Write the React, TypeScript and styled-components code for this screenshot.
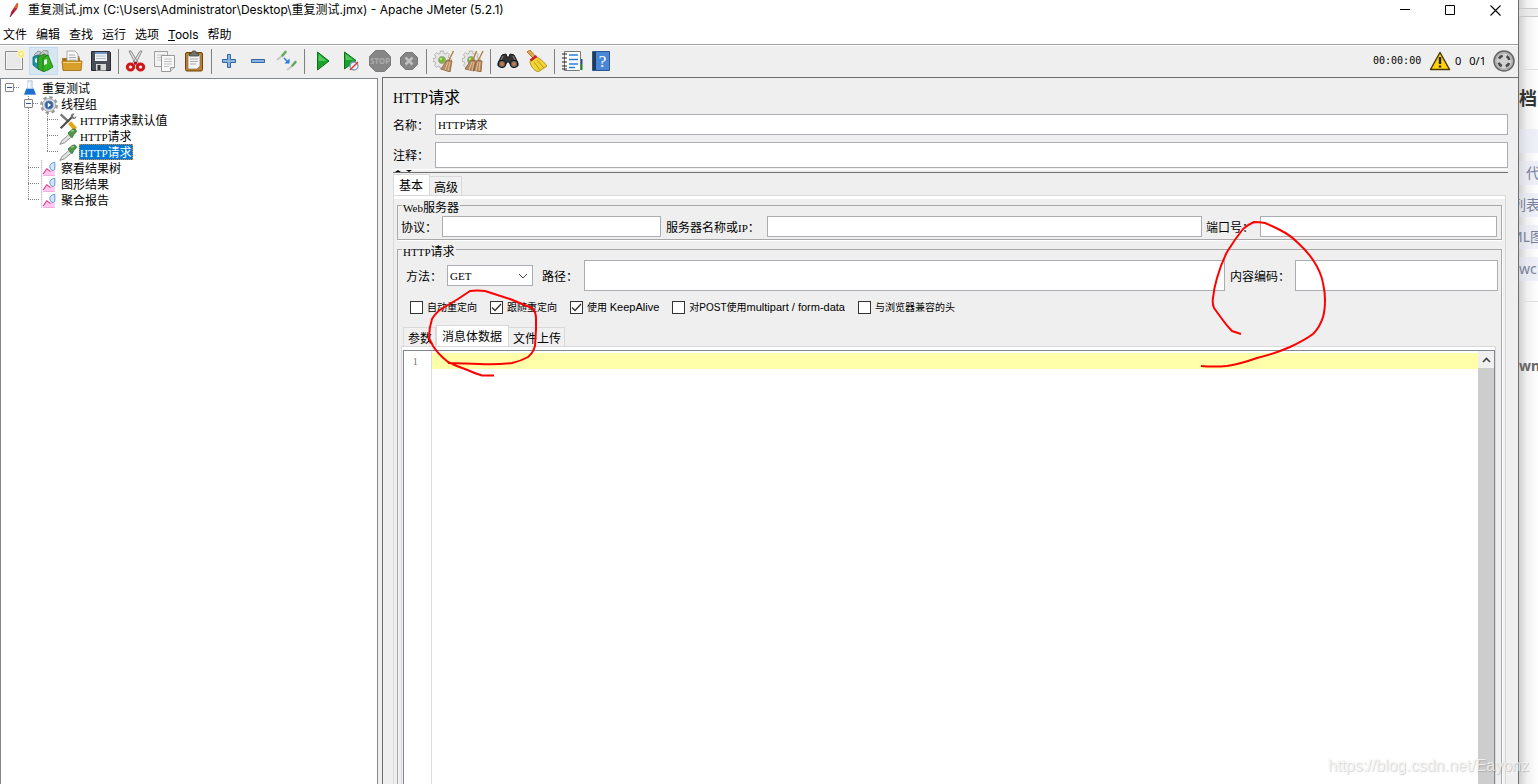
import React from "react";
import styled, { createGlobalStyle, css } from "styled-components";

const Global = createGlobalStyle`
  * { box-sizing: border-box; }
  html, body { margin: 0; height: 100%; overflow: hidden; }
  #root { height: 100%; }
  body {
    font-family: "Liberation Sans", "Noto Sans CJK SC", sans-serif;
    font-size: 12px;
    line-height: 16px;
    color: #000;
    background: #fff;
  }
  button, input, select, textarea { font: inherit; color: inherit; margin: 0; }
`;

/* ---------- frame ---------- */

const Desktop = styled.div`
  display: flex;
  height: 100vh;
  position: relative;
  overflow: hidden;
`;

const AppWindow = styled.div`
  flex: 1;
  min-width: 0;
  display: flex;
  flex-direction: column;
  background: #efefef;
  border-right: 1px solid #6e6e6e;
  font-family: "Noto Sans CJK SC", sans-serif;
`;

const TitleBar = styled.header`
  display: flex;
  align-items: center;
  height: 20px;
  padding: 0 0 0 7px;
  background: #fff;
  font-family: Inter, "Noto Sans CJK SC", sans-serif;
`;

const TitleText = styled.h1`
  flex: 1;
  margin: 0 0 0 7px;
  font-size: 12px;
  font-weight: 400;
  line-height: 20px;
  white-space: nowrap;
`;

const WindowButton = styled.button`
  width: 45px;
  height: 20px;
  padding: 0;
  border: 0;
  background: none;
  display: grid;
  place-items: center;
`;

const MenuBar = styled.nav`
  display: flex;
  gap: 9px;
  height: 25px;
  padding: 6px 3px 0;
  background: #fff;
  border-bottom: 1px solid #a0a0a0;
  font-family: Inter, "Noto Sans CJK SC", sans-serif;
`;

const MenuItem = styled.button`
  padding: 0;
  border: 0;
  background: none;
  height: 18px;
  line-height: 18px;
`;

const ToolBar = styled.div`
  display: flex;
  align-items: flex-start;
  height: 32px;
  padding-top: 1px;
  border-top: 1px solid #fff;
`;

const ToolButton = styled.button<{ $active?: boolean }>`
  width: 29px;
  height: 28px;
  padding: 2px 0 0 2px;
  border: 1px solid ${(p) => (p.$active ? "#c0dcf3" : "transparent")};
  background: ${(p) => (p.$active ? "#d8e6f2" : "none")};
  display: grid;
  place-items: start;
`;

const Separator = styled.span`
  width: 6px;
  height: 25px;
  margin-top: 2px;
  background: linear-gradient(#808080, #808080) 2px 0 / 1px 100% no-repeat;
`;

const Status = styled.div`
  margin-left: auto;
  display: flex;
  align-items: center;
  height: 28px;
  padding-right: 3px;
  font-family: "Noto Sans", sans-serif;
  font-size: 11px;
`;

const Clock = styled.span`
  width: 56px;
  font-family: "DejaVu Sans Mono", monospace;
  font-size: 10px;
`;
const Errors = styled.span`
  margin: 0 8px 0 4px;
`;
const Threads = styled.span`
  margin-right: 7px;
`;

const Body = styled.main`
  flex: 1;
  min-height: 0;
  display: flex;
  gap: 4px;
`;

/* ---------- tree ---------- */

const TreePane = styled.aside`
  flex: 0 0 378px;
  margin-top: 1px;
  padding-top: 1px;
  background: #fff;
  border: solid #828790;
  border-width: 1px 1px 0 1px;
`;

const TreeList = styled.ul`
  list-style: none;
  margin: 0;
  padding: 0;
`;

const TreeRow = styled.li`
  display: flex;
  align-items: center;
  height: 16px;
`;

type Guide = "none" | "line" | "branch" | "last" | "root" | "node";
const vDots = "repeating-linear-gradient(#808080 0 1px, transparent 1px 2px)";
const hDots = "repeating-linear-gradient(90deg, #808080 0 1px, transparent 1px 2px)";
const guides: Record<Guide, string> = {
  none: "none",
  line: `${vDots} 8px 0 / 1px 16px no-repeat`,
  branch: `${vDots} 8px 0 / 1px 16px no-repeat, ${hDots} 8px 7px / 11px 1px no-repeat`,
  last: `${vDots} 8px 0 / 1px 8px no-repeat, ${hDots} 8px 7px / 11px 1px no-repeat`,
  root: `${hDots} 13px 7px / 6px 1px no-repeat`,
  node: `${vDots} 8px 0 / 1px 16px no-repeat, ${hDots} 13px 7px / 6px 1px no-repeat`,
};

const GuideCell = styled.span<{ $kind: Guide }>`
  flex: 0 0 19px;
  height: 16px;
  padding: 3px 0 0 4px;
  background: ${(p) => guides[p.$kind]};
`;

const Toggle = styled.button`
  display: block;
  width: 9px;
  height: 9px;
  padding: 0;
  border: 1px solid #848484;
  border-radius: 1px;
  background: linear-gradient(#33528f, #33528f) center / 5px 1px no-repeat #fafafa;
`;

const NodeIcon = styled.span`
  flex: 0 0 20px;
  height: 16px;
  margin-right: 1px;
  display: grid;
  place-items: center;
`;

const NodeLabel = styled.span<{ $selected?: boolean }>`
  height: 16px;
  line-height: 16px;
  padding: 0 1px;
  white-space: nowrap;
  ${(p) =>
    p.$selected &&
    css`
      background: #0078d7;
      color: #fff;
      outline: 1px dotted #e08a2e;
      outline-offset: -1px;
    `}
`;

/* Latin runs take about half the width of a Chinese character */
const Half = styled.span<{ $large?: boolean }>`
  font-family: "Liberation Serif", serif;
  font-size: ${(p) => (p.$large ? 14 : 11)}px;
`;

/* ---------- editor pane ---------- */

const Pane = styled.section`
  flex: 1;
  min-width: 0;
  display: flex;
  flex-direction: column;
  border: solid #6e6e6e;
  border-width: 1px 0 0 1px;
  padding: 8px 10px 0;
`;

const PaneTitle = styled.h2`
  margin: 0 0 8px;
  font-size: 16px;
  font-weight: 400;
  line-height: 20px;
  height: 20px;
`;

const Field = styled.div<{ $tall?: boolean }>`
  display: flex;
  align-items: center;
  height: ${(p) => (p.$tall ? 26 : 21)}px;
  margin-bottom: ${(p) => (p.$tall ? 1 : 7)}px;
`;

const Label = styled.label<{ $width: number; $indent?: number }>`
  flex: 0 0 ${(p) => p.$width}px;
  height: 16px;
  padding-left: ${(p) => p.$indent ?? 0}px;
  white-space: nowrap;
`;

const TextInput = styled.input<{ $width?: number }>`
  flex: ${(p) => (p.$width ? `0 0 ${p.$width}px` : "1 1 0")};
  min-width: 0;
  align-self: stretch;
  padding: 0 3px;
  border: 1px solid #abadb3;
  border-radius: 0;
  background: #fff;
  outline: 0;
`;

const NameInput = styled(TextInput)`
  padding: 0 2px;
  font-family: "Liberation Serif", "Noto Sans CJK SC", serif;
  font-size: 11px;
`;

const Divider = styled.div`
  height: 4px;
  border-top: 1px solid #fff;
  border-bottom: 1px solid #6e6e6e;
  svg { display: block; }
`;

const Tabs = styled.div`
  display: flex;
  align-items: flex-end;
  height: 22px;
`;

const Tab = styled.button<{ $active?: boolean }>`
  height: ${(p) => (p.$active ? 21 : 19)}px;
  padding: 0 ${(p) => (p.$active ? "6px 0 5px" : "4px")};
  border: 1px solid #d9d9d9;
  border-bottom: 0;
  border-left-width: ${(p) => (p.$active ? 1 : 0)}px;
  background: ${(p) => (p.$active ? "#fff" : "#f0f0f0")};
  line-height: 20px;
  white-space: nowrap;
  padding-left: ${(p) => (p.$active ? 5 : 4)}px;
  padding-right: ${(p) => (p.$active ? 6 : 3)}px;
  &:first-child { border-left-width: 1px; }
`;

const TabPanel = styled.div`
  flex: 1;
  min-height: 0;
  display: flex;
  flex-direction: column;
  margin-right: 2px;
  padding: 2px 3px 0;
  border: solid #d9d9d9;
  border-width: 1px 1px 0;
  box-shadow: inset 0 3px #fff;
`;

const Group = styled.fieldset<{ $fill?: boolean }>`
  min-width: 0;
  margin: 0;
  padding: 0 4px 2px 3px;
  border: 1px solid #a8a8a8;
  box-shadow: 1px 1px #fff;
  ${(p) =>
    p.$fill &&
    css`
      flex: 1;
      margin-top: 2px;
      padding: 0 2px;
      border-bottom: 0;
      display: flex;
      flex-direction: column;
      min-height: 0;
    `}
`;

const Legend = styled.legend<{ $indent: number }>`
  margin-left: ${(p) => p.$indent}px;
  padding: 0 1px;
  height: 14px;
  line-height: 18px;
`;

const ServerRow = styled.div`
  display: flex;
  align-items: center;
  height: 21px;
  margin-top: 4px;
`;

const RequestRow = styled.div`
  display: flex;
  align-items: center;
  height: 31px;
  margin-top: 4px;
  padding: 0 1px 0 6px;
`;

const SelectBox = styled.span`
  position: relative;
  flex: 0 0 86px;
  height: 21px;
  margin-right: 9px;
  svg { position: absolute; right: 5px; top: 8px; pointer-events: none; }
`;

const Select = styled.select`
  appearance: none;
  display: block;
  width: 100%;
  height: 100%;
  padding: 0 2px;
  border: 1px solid #abadb3;
  border-radius: 0;
  background: #fff;
  font-family: "Liberation Serif", serif;
  font-size: 11px;
`;

const Checks = styled.div`
  display: flex;
  gap: 13px;
  height: 13px;
  margin: 10px 0 0 10px;
`;

const Check = styled.label`
  display: flex;
  align-items: center;
  gap: 4px;
  font-family: "Liberation Sans", "Noto Sans CJK SC", sans-serif;
  font-size: 10px;
  line-height: 13px;
  white-space: nowrap;
`;

const Latin = styled.span`
  font-size: 11px;
`;

const Box = styled.input`
  appearance: none;
  width: 13px;
  height: 13px;
  margin: 0;
  border: 1px solid #333;
  background: #fff;
  &:checked {
    background: #fff
      url("data:image/svg+xml,%3Csvg xmlns='http://www.w3.org/2000/svg' viewBox='0 0 11 11'%3E%3Cpath d='M1 5.5l3 3 6-6.5' fill='none' stroke='%23333' stroke-width='1.3'/%3E%3C/svg%3E");
  }
`;

const BodyTabs = styled(Tabs)`
  margin: 10px 0 0 3px;
`;

const BodyPanel = styled.div`
  flex: 1;
  min-height: 0;
  display: flex;
  margin: 0 3px 0 1px;
  padding: 3px 0 0 1px;
  border: solid #d9d9d9;
  border-width: 1px 1px 0;
  box-shadow: inset 0 3px #fff;
`;

const Editor = styled.div`
  flex: 1;
  min-width: 0;
  display: flex;
  border: solid #828790;
  border-width: 1px 1px 0;
  background: #fff;
`;

const Gutter = styled.div`
  flex: 0 0 28px;
  padding: 2px 13px 0 0;
  border-right: 1px solid #ddd;
  text-align: right;
  font-family: "Liberation Serif", serif;
  font-size: 11px;
  color: #808080;
`;

const Code = styled.textarea`
  flex: 1;
  min-width: 0;
  padding: 2px 0 0;
  border: 0;
  outline: 0;
  resize: none;
  overflow: hidden;
  line-height: 16px;
  background: linear-gradient(#ffffaa, #ffffaa) 0 2px / 100% 16px no-repeat #fff;
`;

const ScrollBar = styled.div`
  flex: 0 0 16px;
  display: flex;
  flex-direction: column;
  background: #f0f0f0;
`;
const ScrollButton = styled.button`
  height: 17px;
  padding: 0;
  border: 0;
  background: none;
  display: grid;
  place-items: center;
`;
const Thumb = styled.div`
  flex: 1;
  background: #cdcdcd;
`;

/* ---------- page behind the window ---------- */

const BackPage = styled.aside`
  flex: 0 0 19px;
  display: flex;
  flex-direction: column;
  overflow: hidden;
  background: linear-gradient(90deg, #cfcfcf, #f0f0f0 8px, #fff 19px);
  font-family: "Noto Sans", "Noto Sans CJK SC", sans-serif;
  color: #7b7f9a;
`;
const BackBand = styled.div`
  height: 9px;
  margin-top: 8px;
  border: solid #c8c8c8;
  border-width: 1px 0;
  background: rgba(225, 225, 225, 0.5);
`;
const BackHead = styled.div`
  height: 60px;
  margin-top: 52px;
  border-top: 1px solid #dcdcdc;
  padding-top: 14px;
  font-size: 18px;
  font-weight: 700;
  line-height: 28px;
  color: #333;
  white-space: nowrap;
`;
const BackTag = styled.div<{ $shift?: number }>`
  height: 24px;
  margin-bottom: 8px;
  background: rgba(222, 229, 242, 0.5);
  font-size: 14px;
  line-height: 24px;
  text-indent: ${(p) => p.$shift ?? 0}px;
  white-space: nowrap;
`;
const BackFoot = styled.div`
  margin-top: 12px;
  padding-top: 52px;
  border-top: 1px solid #ddd;
  font-size: 14px;
  font-weight: 700;
  line-height: 24px;
  color: #666;
`;

/* ---------- overlays ---------- */

const TabMark = styled.svg`
  position: absolute;
  left: 425px;
  top: 285px;
  pointer-events: none;
`;
const EncodingMark = styled.svg`
  position: absolute;
  right: 208px;
  top: 215px;
  pointer-events: none;
`;
const Watermark = styled.div`
  position: absolute;
  right: 9px;
  bottom: 8px;
  font-size: 16px;
  line-height: 20px;
  color: rgba(255, 255, 255, 0.75);
  text-shadow: 1px 1px 1px rgba(0, 0, 0, 0.16), 0 0 1px rgba(0, 0, 0, 0.1);
  pointer-events: none;
`;

/* ---------- icons ---------- */

const Ico = ({ children, size = 22 }: { children: React.ReactNode; size?: number }) => (
  <svg width={size} height={size} viewBox="0 0 22 22" aria-hidden="true">
    {children}
  </svg>
);

const IconNew = () => (
  <Ico>
    <path d="M2.500 1.500h17v18h-17z" fill="#f4f4f4" stroke="#8a8a8a" />
    <path d="M4 3h14v15H4z" fill="#e9e9e9" />
    <circle cx="18" cy="4" r="4" fill="#fff6a8" />
    <circle cx="18" cy="4" r="2.200" fill="#fffbe0" stroke="#ead94e" />
  </Ico>
);
const IconTemplates = () => (
  <Ico>
    <path d="M2 5l4-4 3 1-3 5zM8 4l4-4 4 1v5l-6 1z" fill="#c4c8c8" stroke="#7c8484" strokeWidth=".8" />
    <path d="M1 7l5-2 4 2v13l-4-1-5-4z" fill="#1d94a8" stroke="#0f6170" strokeWidth=".8" />
    <path d="M6 7l6-3 4 2v13l-6 2-4-2z" fill="#35a82c" stroke="#1a6d16" strokeWidth=".8" />
    <path d="M11 8l5-3 5 12-5 3-5 2z" fill="#35b51d" stroke="#1b7610" strokeWidth=".8" />
    <path d="M3 9l2-1v5l-2-1zM12 10l3-1v5l-3 1z" fill="#e6f6ea" />
  </Ico>
);
const IconOpen = () => (
  <Ico>
    <path d="M1 8h5l2-2h10l1 3v10H2z" fill="#a8741a" />
    <path d="M6 1h8l3 3v9H6z" fill="#f7f7f7" stroke="#999" strokeWidth=".8" />
    <path d="M8 5h6M8 7.500h7M8 10h7" stroke="#aaa" />
    <path d="M1 11h20l-1 9.500H2z" fill="#d99f2b" stroke="#9c6c10" strokeWidth=".8" />
    <path d="M2 12.500h18" stroke="#f8d47a" />
  </Ico>
);
const IconSave = () => (
  <Ico>
    <path d="M1.500 1.500h18l1 1v18h-19z" fill="#4a4d57" stroke="#272932" />
    <path d="M5 2h12v9H5z" fill="#eef2f6" />
    <path d="M5 2h12v2H5z" fill="#6f94bd" />
    <path d="M6 6h10M6 8.500h10" stroke="#b4bcc4" />
    <path d="M6 14h10v6.500H6z" fill="#d9d9d9" />
    <path d="M7.500 15h3v5h-3z" fill="#30323a" />
  </Ico>
);
const IconCut = () => (
  <Ico>
    <path d="M4 1l2 0 8 13-3 1zM17 1l-2 0L7 14l3 1z" fill="#e4e4e4" stroke="#808080" strokeWidth=".9" />
    <ellipse cx="5.500" cy="17" rx="3.200" ry="3" fill="none" stroke="#d01818" strokeWidth="3" />
    <ellipse cx="15.500" cy="17" rx="3.200" ry="3" fill="none" stroke="#d01818" strokeWidth="3" />
    <circle cx="10.500" cy="13" r="1.600" fill="#b01010" />
  </Ico>
);
const IconCopy = () => (
  <Ico>
    <path d="M.5 1.500h13v15H.5z" fill="#f3f3f3" stroke="#a0a0a0" />
    <path d="M3 5h8M3 7.500h8M3 10h8" stroke="#c8c8c8" />
    <path d="M7.500 5.500h13v12l-4 4h-9z" fill="#f9f9f9" stroke="#979797" />
    <path d="M10 9h8M10 11.500h8M10 14h8M10 16.500h5" stroke="#bdbdbd" />
    <path d="M16.500 21.500v-4h4" fill="#ddd" stroke="#979797" />
  </Ico>
);
const IconPaste = () => (
  <Ico>
    <rect x="2.500" y="2.500" width="17" height="18.500" rx="1.500" fill="#bd7f2c" stroke="#704407" />
    <path d="M5 5h12v11l-3 3H5z" fill="#f5f5f5" stroke="#777" strokeWidth=".7" />
    <path d="M7 9h8M7 11.500h8M7 14h6" stroke="#aaa" />
    <path d="M6.500 3.500h2l1-2.500h3l1 2.500h2V6h-9z" fill="#71756f" stroke="#42453f" strokeWidth=".8" />
  </Ico>
);
const IconPlus = () => (
  <Ico>
    <path d="M9.500 4.500h3v5h5v3h-5v5h-3v-5h-5v-3h5z" fill="#8cb4e0" stroke="#3465a4" />
  </Ico>
);
const IconMinus = () => (
  <Ico>
    <path d="M4.500 9.500h13v3h-13z" fill="#8cb4e0" stroke="#3465a4" />
  </Ico>
);
const IconToggle = () => (
  <Ico>
    <path d="M1 10l6-5" stroke="#c3c9c3" strokeWidth="2" />
    <path d="M6.500 5.500l3-3.500" stroke="#6aa562" strokeWidth="2.600" strokeLinecap="round" />
    <path d="M11 20l5-4" stroke="#c3c9c3" strokeWidth="2" />
    <path d="M16.500 15.500l3-3.500" stroke="#6aa562" strokeWidth="2.600" strokeLinecap="round" />
    <path d="M8 8l4 4" stroke="#3076d8" strokeWidth="1.500" />
    <path d="M13.500 8.500v5h-5z" fill="#2b77e8" />
  </Ico>
);
const IconRun = () => (
  <Ico>
    <path d="M6.500 2v18L18 11z" fill="#19a32c" stroke="#087318" />
    <path d="M7.500 4v7h8z" fill="#54c85e" />
  </Ico>
);
const IconRunNow = () => (
  <Ico>
    <path d="M4.500 2v17L16 10.500z" fill="#19a32c" stroke="#087318" />
    <path d="M5.500 4v6h8z" fill="#54c85e" />
    <circle cx="14" cy="16" r="4" fill="#eef" stroke="#7a94b8" strokeWidth="1.300" />
    <path d="M10 20l8-8" stroke="#d8412f" strokeWidth="1.600" />
  </Ico>
);
const IconStop = () => (
  <Ico>
    <path d="M6.500.5h9l6 6v9l-6 6h-9l-6-6v-9z" fill="#868686" stroke="#7c7c7c" />
    <text x="11" y="14" textAnchor="middle" fontSize="8" fontWeight="700" fontFamily="Noto Sans" fill="#ababab">
      STOP
    </text>
  </Ico>
);
const IconShutdown = () => (
  <Ico>
    <path d="M7.500 2.500h7l5 5v7l-5 5h-7l-5-5v-7z" fill="#858585" stroke="#777" />
    <path d="M7.500 7.500l7 7m0-7l-7 7" stroke="#c0c0c0" strokeWidth="2.600" />
  </Ico>
);
const Gear = () => (
  <>
    <path
      d="M7.500 1h3l.5 2.500 1.500.6 2-1.400 2 2-1.300 2.100.6 1.400 2.400.5v2.800l-2.400.5-.6 1.500 1.300 2-2 2-2-1.300-1.500.6-.5 2.400h-3L7 16.700l-1.500-.6-2 1.300-2-2 1.300-2-.6-1.500L0 11.400V8.600l2.300-.4.6-1.500-1.400-2 2-2 2 1.400L7 3.500z"
      fill="#e6e7e6"
      stroke="#a6a8a6"
      strokeWidth=".8"
    />
    <circle cx="9" cy="10" r="3.500" fill="#76b82e" stroke="#9aa592" />
    <circle cx="8" cy="9" r="1.300" fill="#b6e37c" />
  </>
);
const IconClear = () => (
  <Ico>
    <Gear />
    <path d="M20.500 1l-5 10" stroke="#b98445" strokeWidth="1.500" />
    <path d="M14 10l5 1-2 11-9-3z" fill="#b78c62" stroke="#8d6037" strokeWidth=".8" />
    <path d="M15 12l-3 8m5-8l-2 9" stroke="#e0bd96" />
  </Ico>
);
const IconClearAll = () => (
  <Ico>
    <Gear />
    <path d="M14.500 1l-4 10M21 1l-5 10" stroke="#b98445" strokeWidth="1.500" />
    <path d="M9 10l5 1-2 10-9-2zM15 10l5 1-1 11-8-2z" fill="#b78c62" stroke="#8d6037" strokeWidth=".8" />
    <path d="M10 12l-3 8m5-8l-2 9m6-9l-2 9m4-9l-1 9" stroke="#e0bd96" />
  </Ico>
);
const IconSearch = () => (
  <Ico>
    <path d="M5 5l4-1 1 3h2l1-3 4 1 4 8v3h-7l-2-4h-2l-2 4H1v-3z" fill="#333" stroke="#161616" />
    <circle cx="5" cy="14" r="3.700" fill="#666" stroke="#111" />
    <circle cx="17" cy="14" r="3.700" fill="#666" stroke="#111" />
    <circle cx="5" cy="14" r="2" fill="#c67a45" />
    <circle cx="17" cy="14" r="2" fill="#c67a45" />
    <path d="M6 6l-2 4M16 6l2 4" stroke="#8c8c8c" />
  </Ico>
);
const IconBroom = () => (
  <Ico>
    <path d="M1 2l3-2 5 6-2 2z" fill="#e6a94c" stroke="#996417" strokeWidth=".8" />
    <path d="M9 7c4 0 9 5 12 9l-9 6C7 20 4 15 4 11z" fill="#f2d43a" stroke="#9c8306" strokeWidth=".8" />
    <path d="M4.500 10.500l6-4.500" stroke="#cf2020" strokeWidth="2.600" />
    <path d="M8 12l6 8m-3-10l7 8" stroke="#b99b10" />
  </Ico>
);
const IconFunc = () => (
  <Ico>
    <path d="M18 9h3.500v5H18z" fill="#1b50a8" />
    <path d="M18 14h3.500v6H18z" fill="#168a1c" />
    <path d="M3.500 1.500h16v18l-1 1h-15z" fill="#fff" stroke="#777" />
    <path d="M1 4h5M1 8h5M1 12h5M1 16h5M1 19h5" stroke="#222" strokeWidth="1.200" />
    <path d="M8 5h9M8 9.500h9M8 14h9M8 17.500h6" stroke="#2a7de0" strokeWidth="1.500" />
  </Ico>
);
const IconHelp = () => (
  <Ico>
    <path d="M2.500 1.500h17v19h-17z" fill="#4a86d6" stroke="#2b568f" />
    <path d="M3 2h3v18H3z" fill="#223a5a" />
    <text x="12.500" y="17" textAnchor="middle" fontSize="17" fontFamily="Liberation Serif" fill="#fff">
      ?
    </text>
  </Ico>
);
const IconFeather = () => (
  <svg width="14" height="16" viewBox="0 0 14 16" aria-hidden="true">
    <path d="M10 1c2 0 1 3 0 6l-4 5-3 3 1-5z" fill="#c02a35" />
    <path d="M10 1c2 0 1 3 0 5L7 6z" fill="#e2632c" />
    <path d="M3 15l4-7" stroke="#7c1f5c" />
  </svg>
);
const IconFlask = () => (
  <Ico size={16}>
    <path d="M8 1h6v8l5 11H3L8 9z" fill="#dfeaf6" stroke="#a9bdd2" />
    <path d="M6 12h10l3 8H3z" fill="#1d6fd0" />
    <path d="M9.500 3v8" stroke="#fff" strokeWidth="2" />
  </Ico>
);
const IconThreads = () => (
  <Ico size={18}>
    <circle cx="11" cy="11" r="9" fill="none" stroke="#9a9da2" strokeWidth="4" strokeDasharray="4 3.070" />
    <circle cx="11" cy="11" r="8" fill="#dcdee0" stroke="#a4a7ab" />
    <circle cx="11" cy="11" r="5" fill="#2f5f9e" stroke="#6f8fb8" />
    <path d="M9.500 8v6l4-3z" fill="#fff" />
  </Ico>
);
const IconConfig = () => (
  <Ico size={18}>
    <path d="M2 3l10 9" stroke="#777" strokeWidth="3" />
    <path d="M13 13l7 8" stroke="#e3a810" strokeWidth="5" />
    <path d="M2 20L16 6" stroke="#4c4f4c" strokeWidth="2.600" />
    <path d="M15 7c-2-3 1-6 4-5l-2 3 2 2 2-2c1 3-3 5-6 2z" fill="#777" />
  </Ico>
);
const IconSampler = () => (
  <Ico size={18}>
    <path d="M1 20l3-5 8-7 3 3-8 7z" fill="#dfe3df" stroke="#7b827b" />
    <path d="M11 6l5 6 2-4 3-3c1-3-2-5-5-3z" fill="#4f9a4a" stroke="#2e6a30" />
    <path d="M15 4l3-1" stroke="#a8d8a0" strokeWidth="1.500" />
  </Ico>
);
const IconReport = () => (
  <Ico size={16}>
    <path d="M1 0v22" stroke="#999" strokeDasharray="2 1" />
    <path d="M3 19l5-6 5 2 6-7v13H3z" fill="#ffc9ee" />
    <path d="M3 19l5-7 5 4" fill="none" stroke="#e23f8e" strokeWidth="1.600" />
    <path d="M13 12c-2-4 0-8 6-9v10c-2 2-5 2-6-1z" fill="#d2e7fb" stroke="#5890cc" strokeWidth="1.300" />
    <path d="M3 21.500h16" stroke="#e88ac8" />
  </Ico>
);
const IconWarning = () => (
  <svg width="22" height="20" viewBox="0 0 22 20" aria-hidden="true">
    <path d="M11 1.500L20.500 18.500h-19z" fill="#ffd20a" stroke="#4a3c00" strokeWidth="1.500" strokeLinejoin="round" />
    <path d="M11 6v7M11 14.500v2" stroke="#222" strokeWidth="2.400" />
  </svg>
);
const IconEngine = () => (
  <svg width="22" height="22" viewBox="0 0 22 22" aria-hidden="true">
    <circle cx="11" cy="11" r="10" fill="#b0b0b0" stroke="#666" strokeWidth="1.500" />
    <circle cx="11" cy="11" r="7.500" fill="#d2d2d2" />
    <circle cx="11" cy="11" r="5.500" fill="none" stroke="#484848" strokeWidth="2.600" strokeDasharray="4.600 4.040" strokeDashoffset="-2" />
  </svg>
);

/* ---------- data ---------- */

const toolGroups: [string, React.FC][][] = [
  [["New", IconNew], ["Templates", IconTemplates], ["Open", IconOpen], ["Save", IconSave]],
  [["Cut", IconCut], ["Copy", IconCopy], ["Paste", IconPaste]],
  [["Expand", IconPlus], ["Collapse", IconMinus], ["Toggle", IconToggle]],
  [["Start", IconRun], ["Start no pauses", IconRunNow], ["Stop", IconStop], ["Shutdown", IconShutdown]],
  [["Clear", IconClear], ["Clear all", IconClearAll]],
  [["Search", IconSearch], ["Reset search", IconBroom]],
  [["Function helper", IconFunc], ["Help", IconHelp]],
];

const nodes: { guides: Guide[]; icon: React.FC; latin?: string; text: string; selected?: boolean }[] = [
  { guides: ["root"], icon: IconFlask, text: "重复测试" },
  { guides: ["none", "node"], icon: IconThreads, text: "线程组" },
  { guides: ["none", "line", "branch"], icon: IconConfig, latin: "HTTP", text: "请求默认值" },
  { guides: ["none", "line", "branch"], icon: IconSampler, latin: "HTTP", text: "请求" },
  { guides: ["none", "line", "last"], icon: IconSampler, latin: "HTTP", text: "请求", selected: true },
  { guides: ["none", "branch"], icon: IconReport, text: "察看结果树" },
  { guides: ["none", "branch"], icon: IconReport, text: "图形结果" },
  { guides: ["none", "last"], icon: IconReport, text: "聚合报告" },
];

export default function App() {
  return (
    <Desktop>
      <Global />
      <AppWindow>
        <TitleBar>
          <IconFeather />
          <TitleText>重复测试.jmx (C:\Users\Administrator\Desktop\重复测试.jmx) - Apache JMeter (5.2.1)</TitleText>
          <WindowButton aria-label="Minimize">
            <svg width="11" height="11"><path d="M0 4.500h10" stroke="#000" /></svg>
          </WindowButton>
          <WindowButton aria-label="Maximize">
            <svg width="11" height="11"><path d="M.5.500h9v9h-9z" fill="none" stroke="#000" /></svg>
          </WindowButton>
          <WindowButton aria-label="Close">
            <svg width="11" height="11"><path d="M.5.500l10 10m0-10l-10 10" stroke="#000" strokeWidth="1.100" /></svg>
          </WindowButton>
        </TitleBar>
        <MenuBar>
          {["文件", "编辑", "查找", "运行", "选项"].map((m) => <MenuItem key={m}>{m}</MenuItem>)}
          <MenuItem><u>T</u>ools</MenuItem>
          <MenuItem>帮助</MenuItem>
        </MenuBar>
        <ToolBar>
          {toolGroups.map((group, i) => (
            <React.Fragment key={i}>
              {i > 0 && <Separator />}
              {group.map(([name, Icon]) => (
                <ToolButton key={name} aria-label={name} $active={name === "Templates"}><Icon /></ToolButton>
              ))}
            </React.Fragment>
          ))}
          <Status>
            <Clock>00:00:00</Clock>
            <IconWarning />
            <Errors>0</Errors>
            <Threads>0/1</Threads>
            <IconEngine />
          </Status>
        </ToolBar>
        <Body>
          <TreePane>
            <TreeList>
              {nodes.map((n, i) => (
                <TreeRow key={i}>
                  {n.guides.map((g, j) => (
                    <GuideCell key={j} $kind={g}>
                      {(g === "root" || g === "node") && <Toggle aria-label="Collapse node" />}
                    </GuideCell>
                  ))}
                  <NodeIcon><n.icon /></NodeIcon>
                  <NodeLabel $selected={n.selected}>{n.latin && <Half>{n.latin}</Half>}{n.text}</NodeLabel>
                </TreeRow>
              ))}
            </TreeList>
          </TreePane>
          <Pane>
            <PaneTitle><Half $large>HTTP</Half>请求</PaneTitle>
            <Field>
              <Label $width={42} htmlFor="name">名称：</Label>
              <NameInput id="name" defaultValue="HTTP请求" />
            </Field>
            <Field $tall>
              <Label $width={42} htmlFor="comment">注释：</Label>
              <TextInput id="comment" />
            </Field>
            <Divider>
              <svg width="20" height="2"><path d="M2 2l3-2 3 2zM13 0h6l-3 2z" /></svg>
            </Divider>
            <Tabs>
              <Tab $active>基本</Tab>
              <Tab>高级</Tab>
            </Tabs>
            <TabPanel>
              <Group>
                <Legend $indent={1}><Half>Web</Half>服务器</Legend>
                <ServerRow>
                  <Label $width={41} htmlFor="protocol">协议：</Label>
                  <TextInput id="protocol" $width={219} />
                  <Label $width={106} $indent={5} htmlFor="server">服务器名称或<Half>IP</Half>：</Label>
                  <TextInput id="server" />
                  <Label $width={58} $indent={4} htmlFor="port">端口号：</Label>
                  <TextInput id="port" $width={237} />
                </ServerRow>
              </Group>
              <Group $fill>
                <Legend $indent={2}><Half>HTTP</Half>请求</Legend>
                <RequestRow>
                  <Label $width={41} htmlFor="method">方法：</Label>
                  <SelectBox>
                    <Select id="method" defaultValue="GET"><option>GET</option></Select>
                    <svg width="10" height="6"><path d="M1 1l4 4 4-4" fill="none" stroke="#444" /></svg>
                  </SelectBox>
                  <Label $width={42} htmlFor="path">路径：</Label>
                  <TextInput id="path" />
                  <Label $width={70} $indent={5} htmlFor="encoding">内容编码：</Label>
                  <TextInput id="encoding" $width={203} />
                </RequestRow>
                <Checks>
                  <Check><Box type="checkbox" />自动重定向</Check>
                  <Check><Box type="checkbox" defaultChecked />跟随重定向</Check>
                  <Check><Box type="checkbox" defaultChecked /><span>使用 <Latin>KeepAlive</Latin></span></Check>
                  <Check><Box type="checkbox" /><span>对POST使用<Latin>multipart / form-data</Latin></span></Check>
                  <Check><Box type="checkbox" />与浏览器兼容的头</Check>
                </Checks>
                <BodyTabs>
                  <Tab>参数</Tab>
                  <Tab $active>消息体数据</Tab>
                  <Tab>文件上传</Tab>
                </BodyTabs>
                <BodyPanel>
                  <Editor>
                    <Gutter>1</Gutter>
                    <Code aria-label="消息体数据" />
                    <ScrollBar>
                      <ScrollButton aria-label="Scroll up">
                        <svg width="9" height="6"><path d="M1 5l3.500-3.500L8 5" fill="none" stroke="#444" strokeWidth="1.600" /></svg>
                      </ScrollButton>
                      <Thumb />
                    </ScrollBar>
                  </Editor>
                </BodyPanel>
              </Group>
            </TabPanel>
          </Pane>
        </Body>
      </AppWindow>
      <BackPage>
        <BackBand />
        <BackHead>档</BackHead>
        <BackTag />
        <BackTag $shift={7}>代</BackTag>
        <BackTag $shift={-7}>列表</BackTag>
        <BackTag $shift={-9}>ML图</BackTag>
        <BackTag>wc</BackTag>
        <BackFoot>wn</BackFoot>
      </BackPage>
      <TabMark width="120" height="100" viewBox="425 285 120 100" fill="none" stroke="#f00" strokeWidth="2" strokeLinejoin="round">
        <path d="M494 375.500H482Q474 373 465 369Q456 366 448 362Q438 354 433 346L429 338Q429 328 432 319Q436 312 443 308L458 299 470 291Q477 290 485 291L510 299 532 308Q536 312 536 318V329L535 346Q533 353 528 357Q521 361 512 363Q496 365 480 364L448 363" />
      </TabMark>
      <EncodingMark width="135" height="160" viewBox="1195 215 135 160" fill="none" stroke="#f00" strokeWidth="2" strokeLinejoin="round">
        <path d="M1241 334L1232 331Q1227 326 1222 319L1214 308Q1212 303 1213 298Q1214 288 1217 278Q1221 264 1227 252Q1235 239 1243 229Q1249 224 1254 222Q1259 222 1265 223Q1272 226 1280 230Q1290 235 1297 242Q1307 251 1313 260Q1321 272 1323 283Q1325 292 1325 300Q1325 310 1323 317Q1320 327 1313 334Q1305 340 1290 347Q1274 354 1257 358Q1240 364 1227 366Q1214 367 1201 366" />
      </EncodingMark>
      <Watermark>https://blog.csdn.net/Eayonz</Watermark>
    </Desktop>
  );
}
